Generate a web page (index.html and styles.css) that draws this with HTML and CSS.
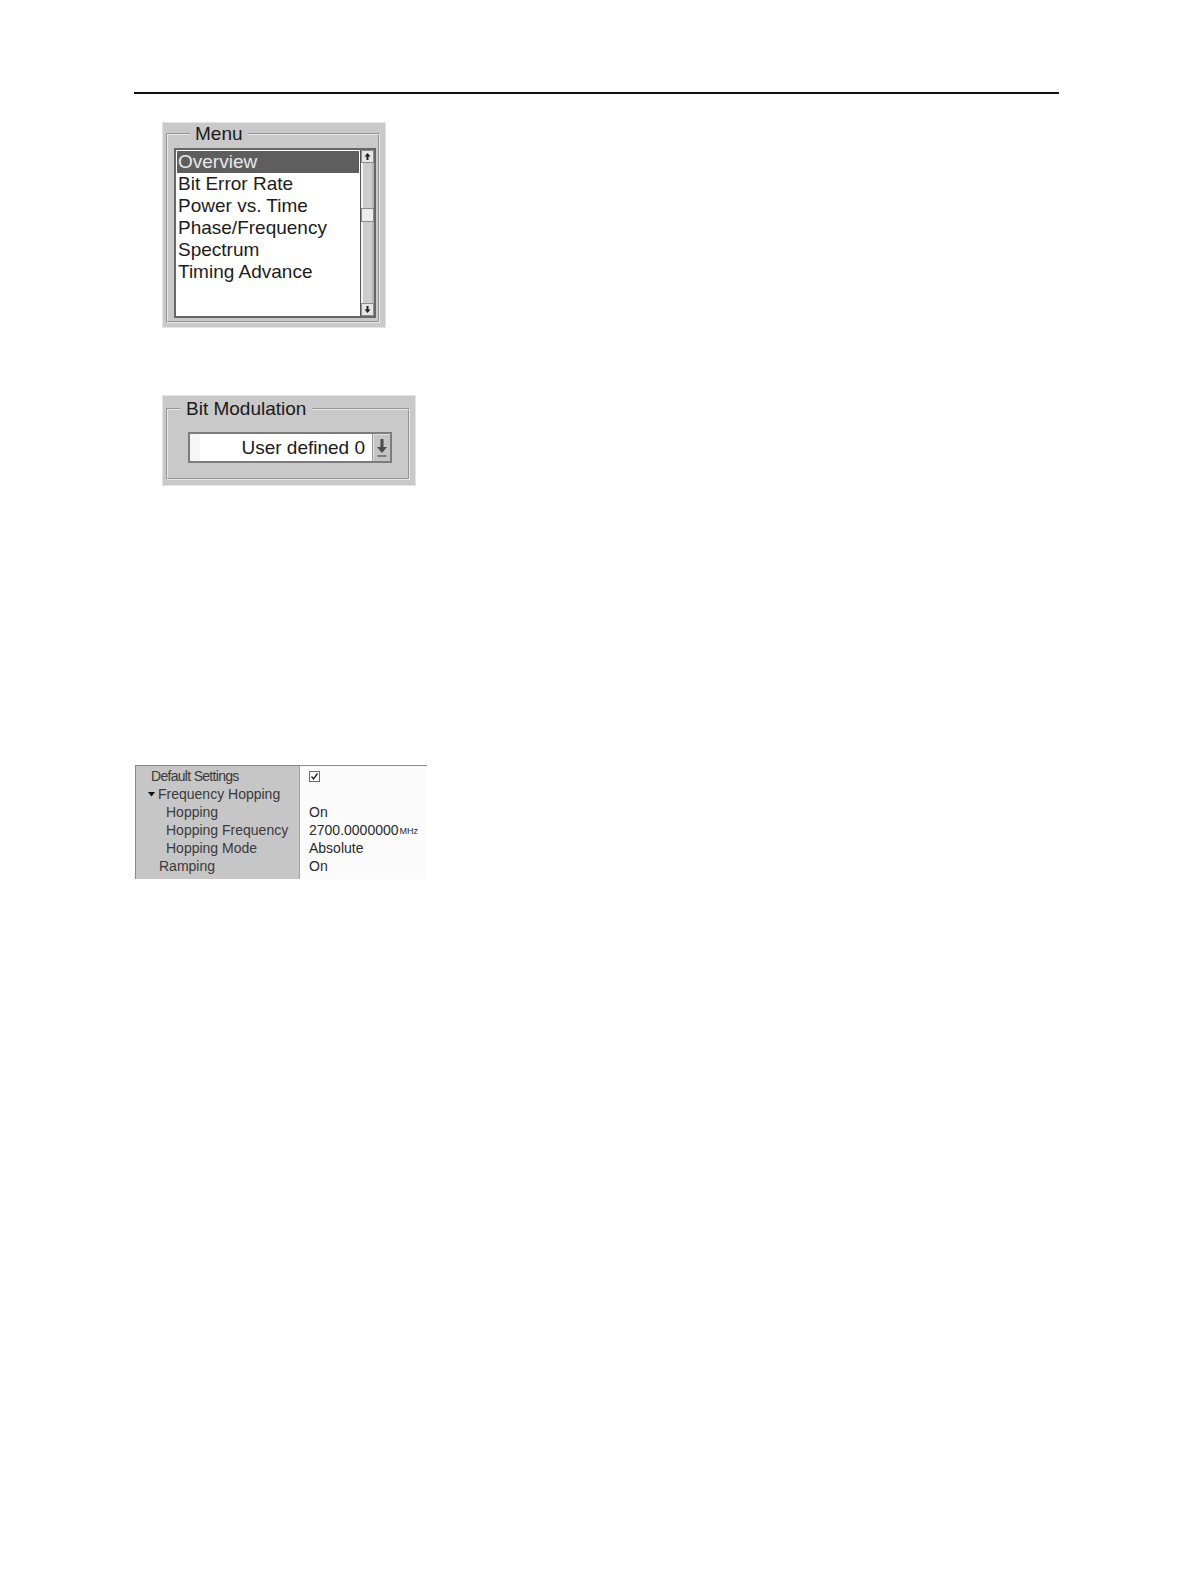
FILE: index.html
```html
<!DOCTYPE html>
<html>
<head>
<meta charset="utf-8">
<title>Menu</title>
<link rel="stylesheet" href="styles.css">
</head>
<body>
<div class="page">
  <div class="rule"></div>

  <div class="panel menu-panel">
    <fieldset class="group menu-group">
      <legend class="legend menu-legend">Menu</legend>
      <div class="listbox">
        <ul class="list">
          <li class="item sel">Overview</li>
          <li class="item">Bit Error Rate</li>
          <li class="item">Power vs. Time</li>
          <li class="item">Phase/Frequency</li>
          <li class="item">Spectrum</li>
          <li class="item">Timing Advance</li>
        </ul>
        <div class="scrollbar">
          <div class="sb-btn">
            <svg width="9" height="9" viewBox="0 0 9 9"><path d="M4.5 1 L7.5 4.5 H5.5 V8 H3.5 V4.5 H1.5 Z" fill="#222"/></svg>
          </div>
          <div class="sb-track">
            <div class="sb-thumb"></div>
          </div>
          <div class="sb-btn">
            <svg width="9" height="9" viewBox="0 0 9 9"><path d="M4.5 8 L7.5 4.5 H5.5 V1 H3.5 V4.5 H1.5 Z" fill="#222"/></svg>
          </div>
        </div>
      </div>
    </fieldset>
  </div>

  <div class="panel bit-panel">
    <fieldset class="group bit-group">
      <legend class="legend bit-legend">Bit Modulation</legend>
      <div class="dropdown">
        <div class="dd-text">User defined 0</div>
        <div class="dd-btn">
          <svg width="16" height="27" viewBox="0 0 16 27"><path d="M6.5 5 H9.5 V13 H13 L8 19 L3 13 H6.5 Z" fill="#4a4a4a"/><rect x="3.5" y="21" width="9" height="2" fill="#7a7a7a"/></svg>
        </div>
      </div>
    </fieldset>
  </div>

  <div class="props">
    <div class="keys">
      <div class="row l0 tight">Default Settings</div>
      <div class="row lt"><svg class="tri" width="7" height="5" viewBox="0 0 7 5"><path d="M0 0 H7 L3.5 4.5 Z" fill="#111"/></svg>Frequency Hopping</div>
      <div class="row l2">Hopping</div>
      <div class="row l2">Hopping Frequency</div>
      <div class="row l2">Hopping Mode</div>
      <div class="row l1">Ramping</div>
    </div>
    <div class="vals">
      <div class="row v"><svg class="chk" width="11" height="11" viewBox="0 0 11 11"><rect x="0.5" y="0.5" width="10" height="10" fill="#fff" stroke="#6a6a6a"/><path d="M2.5 5.5 L4.5 8 L8.5 2.5" fill="none" stroke="#222" stroke-width="1.3"/></svg></div>
      <div class="row v"></div>
      <div class="row v">On</div>
      <div class="row v">2700.0000000<span class="unit">MHz</span></div>
      <div class="row v">Absolute</div>
      <div class="row v">On</div>
    </div>
  </div>
</div>
</body>
</html>
```

FILE: styles.css
```css
html, body {
  margin: 0;
  padding: 0;
  background: #ffffff;
}

body {
  font-family: "Liberation Sans", Arial, sans-serif;
  color: #111;
}

.page {
  display: flex;
  flex-direction: column;
  align-items: flex-start;
}

.rule {
  margin: 92px 0 0 134px;
  width: 925px;
  height: 2px;
  background: #111;
}

/* generic panel */
.panel {
  box-sizing: border-box;
  background: #c9c9c9;
  border: 1px solid #e4e4e4;
}

.group {
  margin: 0;
  min-width: 0;
  border: 2px groove #e8e8e8;
}

.legend {
  font-size: 19px;
  line-height: 22px;
  color: #1a1a1a;
}

/* menu panel */
.menu-panel {
  margin: 28px 0 0 162px;
  width: 224px;
  padding: 0 5px 4px 3px;
}

.menu-group {
  padding: 3px 2px 3px 6px;
}

.menu-legend {
  margin-left: 16px;
  padding: 0 5px;
}

.listbox {
  box-sizing: border-box;
  width: 202px;
  height: 170px;
  border: 2px solid #666;
  display: flex;
}

.list {
  flex: 1;
  margin: 0;
  padding: 1px;
  list-style: none;
  background: #fff;
}

.item {
  font-size: 19px;
  line-height: 22px;
  padding-left: 1px;
  color: #1c1c1c;
  white-space: nowrap;
}

.item.sel {
  background: #5e5e5e;
  color: #e8e8e8;
}

.scrollbar {
  width: 14px;
  box-sizing: border-box;
  border-left: 1px solid #555;
  background: linear-gradient(to right, #f2f2f2 0, #f2f2f2 2px, #cdcdcd 2px, #cdcdcd 11px, #b4b4b4 11px);
  display: flex;
  flex-direction: column;
}

.sb-btn {
  height: 13px;
  box-sizing: border-box;
  background: #e6e6e6;
  border: 1px solid #8c8c8c;
  display: flex;
  align-items: center;
  justify-content: center;
}

.sb-track {
  flex: 1;
}

.sb-thumb {
  margin-top: 45px;
  height: 14px;
  box-sizing: border-box;
  background: #ececec;
  border: 1px solid #8c8c8c;
}

/* bit modulation panel */
.bit-panel {
  margin: 67px 0 0 162px;
  width: 254px;
  padding: 2px 5px 5px 3px;
}

.bit-group {
  padding: 12px 16px 15px 12px;
}

.bit-legend {
  margin-left: 0;
  padding: 0 6px;
}

.dropdown {
  margin-left: 8px;
  box-sizing: border-box;
  width: 204px;
  height: 31px;
  border: 2px solid #7c7c7c;
  background: #fff;
  display: flex;
}

.dd-text {
  flex: 1;
  text-align: right;
  font-size: 19px;
  line-height: 27px;
  padding-right: 7px;
  color: #1a1a1a;
  white-space: nowrap;
  background: linear-gradient(to right, #f6f6f6 0, #f6f6f6 10px, #fff 10px);
}

.dd-btn {
  width: 18px;
  box-sizing: border-box;
  background: #c4c4c4;
  border-left: 1px solid #999;
  box-shadow: inset 1px 1px 0 #e2e2e2;
  display: flex;
  align-items: center;
  justify-content: center;
}

/* property table */
.props {
  margin: 279px 0 0 135px;
  width: 292px;
  height: 114px;
  box-sizing: border-box;
  border-top: 1px solid #8a8a8a;
  border-left: 1px solid #8a8a8a;
  display: flex;
}

.keys {
  width: 164px;
  box-sizing: border-box;
  background: #c6c6c6;
  border-right: 1px solid #a2a2a2;
  padding-top: 1px;
}

.vals {
  flex: 1;
  background: #fbfbfb;
  padding-top: 1px;
}

.row {
  height: 18px;
  line-height: 18px;
  font-size: 14px;
  color: #3a3a3a;
  white-space: nowrap;
  display: flex;
  align-items: center;
}

.l0 { padding-left: 15px; }
.lt { padding-left: 12px; }
.l1 { padding-left: 23px; }
.l2 { padding-left: 30px; }
.v  { padding-left: 9px; color: #2a2a2a; }

.tight {
  letter-spacing: -0.7px;
}

.tri {
  margin-right: 3px;
}

.unit {
  font-size: 9px;
  margin-left: 1px;
  padding-top: 2px;
}
```
